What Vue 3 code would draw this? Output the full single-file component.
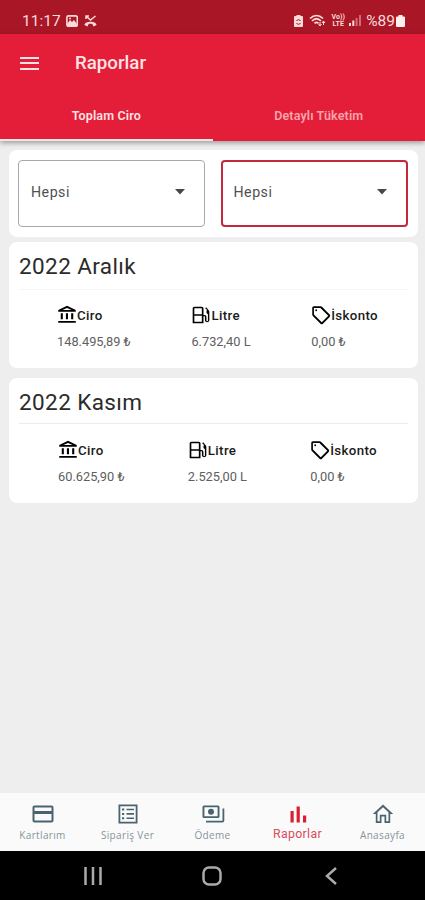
<template>
  <div class="screen">
    <div class="status">
      <span class="clock">11:17</span>
      <svg class="s-image" viewBox="0 0 12 12">
        <rect x="0.9" y="0.9" width="10.4" height="10.4" rx="1.6" fill="none" stroke="#fbdada" stroke-width="1.6" />
        <path d="M1 9l3-4 2 2 2-2 3 4v2H1z" fill="#fbdada" />
        <circle cx="4" cy="3.5" r="1" fill="#fbdada" />
      </svg>
      <svg class="s-missed" viewBox="0 0 13 12">
        <path d="M.5 10c0-4.500 12-4.500 12 0l-3 1.500-1-2.300c-1.300-.5-2.700-.5-4 0l-1 2.300z" fill="#fbdada" />
        <path d="M2 4V1h3M2 1l4.500 4L11.500 1" fill="none" stroke="#fbdada" stroke-width="1.5" />
      </svg>
      <div class="status-right">
        <svg width="9" height="12" viewBox="0 0 9 12">
          <path d="M2.500 0h4v1H8a1 1 0 0 1 1 1v9a1 1 0 0 1-1 1H1a1 1 0 0 1-1-1V2a1 1 0 0 1 1-1h1.500z" fill="#fbdada" />
          <path d="M2.500 6a2.200 2.200 0 0 1 4 0M6.500 8a2.200 2.200 0 0 1-4 0" fill="none" stroke="#a91727" />
        </svg>
        <svg class="s-wifi" width="17" height="13" viewBox="0 0 17 13">
          <path d="M1 4.500c4-4 9-4 13 0M3 7c3-3 6-3 9 0M5.500 9.300q2-1.800 4 0" fill="none" stroke="#fbdada" stroke-width="1.700" />
          <path d="M11 12V8M9.500 10L11 12l1.500-2M14.500 7v4M13 9l1.500-2L16 9" fill="none" stroke="#fbdada" stroke-width="1" />
        </svg>
        <span class="volte"><b>Vo))</b><b>LTE</b></span>
        <svg class="s-signal" width="12" height="11" viewBox="0 0 12 11">
          <path d="M0 8h2v3H0zM3.300 5.500h2V11h-2z" fill="#fbdada" />
          <path d="M6.600 3h2v8h-2zM10 0h2v11h-2z" fill="#d06c75" />
        </svg>
        <span class="percent">%89</span>
        <svg width="9" height="12" viewBox="0 0 9 12">
          <path d="M2.500 0h4v1.500H8a1 1 0 0 1 1 1V11a1 1 0 0 1-1 1H1a1 1 0 0 1-1-1V2.500a1 1 0 0 1 1-1h1.500z" fill="#fff0ee" />
        </svg>
      </div>
    </div>

    <header class="appbar">
      <div class="title-row">
        <div class="burger"><i></i><i></i><i></i></div>
        <h1>Raporlar</h1>
      </div>
      <div class="tabs">
        <div class="tab active"><span>Toplam Ciro</span></div>
        <div class="tab"><span>Detaylı Tüketim</span></div>
      </div>
    </header>

    <main>
      <section class="card filters">
        <div v-for="n in 2" :key="n" class="select" :class="{ focused: n === 2 }">
          <span>Hepsi</span>
          <svg width="10" height="6" viewBox="0 0 10 6"><path d="M0 0h10L5 5.500z" fill="#484848" /></svg>
        </div>
      </section>

      <section v-for="(report, i) in reports" :key="report.month" class="card report" :class="'report-' + i">
        <h2>{{ report.month }}</h2>
        <div class="stats">
          <div v-for="stat in report.stats" :key="stat.label" class="stat">
            <div class="label">
              <svg class="stat-icon" viewBox="0 0 24 24"><path fill-rule="evenodd" :d="icons[stat.icon]" /></svg>
              <span>{{ stat.label }}</span>
            </div>
            <div class="value">{{ stat.value }}</div>
          </div>
        </div>
      </section>
    </main>

    <nav class="bottom">
      <div v-for="item in menu" :key="item.label" class="item" :class="{ current: item.current }">
        <svg viewBox="0 0 24 24"><path fill-rule="evenodd" :d="icons[item.icon]" /></svg>
        <span>{{ item.label }}</span>
      </div>
    </nav>

    <div class="system">
      <svg width="18" height="18" viewBox="0 0 18 18"><path d="M1.500 0v18M9 0v18M16.500 0v18" /></svg>
      <svg width="20" height="20" viewBox="0 0 20 20"><rect x="1.500" y="1.500" width="17" height="17" rx="5.500" /></svg>
      <svg width="12" height="18" viewBox="0 0 12 18"><path d="M11 1L2 9l9 8" /></svg>
    </div>
  </div>
</template>

<script setup>
const icons = {
  bank: "M7 10H4.500v7H7v-7zm6.200 0h-2.500v7h2.500v-7zM22.500 19.200h-21v2h21v-2zM19.500 10H17v7h2.500v-7zM12 3.500L17.500 6H6.500L12 3.500M12 .8L1.500 6v2.200h21V6L12 .8z",
  fuel: "M4 2h9a2 2 0 0 1 2 2v8h1.500a2 2 0 0 1 2 2v4.500a.9.9 0 0 0 1.800 0V11a3 3 0 0 1-1.800-3c0-1 .3-1.500.8-2L17 4l1.200-1.200 3 3.500c.5.500.8 1 .8 1.700v10.500a2.700 2.700 0 0 1-5.300 0v-5H15V22H2V4a2 2 0 0 1 2-2zm0 2v7h9V4H4zm0 9v7h9v-7H4z",
  tag: "M22.400 11.400L13.200 2.200C12.800 1.800 12.200 1.500 11.500 1.500H3.500c-1.100 0-2 .9-2 2v8c0 .6.200 1.200.7 1.700l9.200 9.200c.8.800 2.100.8 2.900 0l8.100-8.100c.8-.8.8-2.100 0-2.900zM12.900 20.700L3.500 11.300V3.500h7.800l9.400 9.400-7.800 7.800zM6.200 5.200a1.100 1.100 0 1 0 0 2.200 1.100 1.100 0 0 0 0-2.200z",
  card: "M20.500 3.500h-17a2 2 0 0 0-2 2v13a2 2 0 0 0 2 2h17a2 2 0 0 0 2-2v-13a2 2 0 0 0-2-2zm0 15h-17v-6.500h17v6.500zm0-9.500h-17V5.500h17V9z",
  list: "M2.500 2.500h19v19h-19zM4.300 4.300v15.400h15.400V4.300zM6 6.500h2.200v2H6zM10.500 6.700H18v1.600h-7.500zM6 10.900h2.200v2H6zM10.500 11.100H18v1.600h-7.500zM6 15.300h2.200v2H6zM10.500 15.500H18v1.600h-7.500z",
  money: "M3 3.500h14a1.500 1.500 0 0 1 1.500 1.500v9.500a1.500 1.500 0 0 1-1.500 1.500H3a1.500 1.500 0 0 1-1.500-1.500V5A1.500 1.500 0 0 1 3 3.500zM3.400 5.300v8.900h13.200V5.300zM10 6.800a3 3 0 1 1 0 6 3 3 0 0 1 0-6zM21.500 6.500h1.800v12a2 2 0 0 1-2 2H5v-1.800h16.500z",
  chart: "M4.500 9h3.200v11.500H4.500zM10.600 4.500h3.200v16h-3.200zM17 13.500h3.200v7H17z",
  home: "M12 5.200l5.500 5V19.300h-2.300v-6.600H8.800v6.600H6.500v-9.100L12 5.200M12 2.500L1.800 12h3v9h5.700v-6.600h3V21h5.700v-9h3L12 2.500z",
};

const reports = [
  {
    month: "2022 Aralık",
    stats: [
      { icon: "bank", label: "Ciro", value: "148.495,89 ₺" },
      { icon: "fuel", label: "Litre", value: "6.732,40 L" },
      { icon: "tag", label: "İskonto", value: "0,00 ₺" },
    ],
  },
  {
    month: "2022 Kasım",
    stats: [
      { icon: "bank", label: "Ciro", value: "60.625,90 ₺" },
      { icon: "fuel", label: "Litre", value: "2.525,00 L" },
      { icon: "tag", label: "İskonto", value: "0,00 ₺" },
    ],
  },
];

const menu = [
  { icon: "card", label: "Kartlarım" },
  { icon: "list", label: "Sipariş Ver" },
  { icon: "money", label: "Ödeme" },
  { icon: "chart", label: "Raporlar", current: true },
  { icon: "home", label: "Anasayfa" },
];
</script>

<style>
body {
  margin: 0;
}
</style>

<style scoped>
.screen {
  width: 425px;
  height: 900px;
  display: flex;
  flex-direction: column;
  overflow: hidden;
  background: #eeeeee;
  font-family: Roboto, "Liberation Sans", sans-serif;
}

.status {
  height: 34px;
  box-sizing: border-box;
  flex: none;
  display: flex;
  align-items: center;
  padding: 7px 20px 0 22px;
  background: #a91727;
  color: #fbdada;
}

.clock {
  width: 44px;
  font-size: 15.5px;
}

.s-image {
  width: 12px;
  height: 12px;
}

.s-missed {
  width: 13px;
  height: 12px;
  margin-left: 6px;
}

.status-right {
  margin-left: auto;
  display: flex;
  align-items: center;
}

.s-wifi {
  margin-left: 6px;
}

.volte {
  display: flex;
  flex-direction: column;
  align-items: center;
  width: 14px;
  margin-left: 5px;
  font-size: 7px;
  line-height: 6.5px;
  white-space: nowrap;
}

.s-signal {
  margin-left: 4px;
}

.percent {
  margin: 0 1px 0 5px;
  font-size: 15.5px;
}

.appbar {
  flex: none;
  height: 107px;
  display: flex;
  flex-direction: column;
  position: relative;
  background: #e41e39;
  color: #fde3e3;
  box-shadow: 0 2px 5px rgba(0, 0, 0, 0.35);
}

.title-row {
  height: 58px;
  display: flex;
  align-items: center;
  padding-left: 20px;
}

.burger {
  width: 19px;
  display: flex;
  flex-direction: column;
  gap: 3.5px;
}

.burger i {
  height: 2px;
  background: #fde3e3;
}

h1 {
  margin: 0 0 0 36px;
  font-size: 18.7px;
  font-weight: 500;
}

.tabs {
  flex: 1;
  display: flex;
}

.tab {
  flex: 1;
  display: flex;
  align-items: center;
  justify-content: center;
  box-sizing: border-box;
  border-bottom: 2px solid transparent;
  font-size: 12.5px;
  font-weight: 600;
  letter-spacing: 0.15px;
  color: #f8a6ab;
}

.tab.active {
  border-bottom-color: #f4e4e4;
  color: #fde3e3;
}

main {
  flex: 1;
  padding: 9px 7px 0 9px;
}

.card {
  box-sizing: border-box;
  background: #fff;
  border-radius: 8px;
}

.filters {
  height: 87px;
  display: flex;
  gap: 16px;
  padding: 10px 10px 10px 9px;
}

.select {
  flex: 1;
  display: flex;
  align-items: center;
  justify-content: space-between;
  box-sizing: border-box;
  padding: 0 19px 4px 12px;
  border: 1px solid #a9a9a9;
  border-radius: 4px;
  font-size: 14.2px;
  letter-spacing: 0.5px;
  color: #505050;
}

.select.focused {
  border: 2px solid #c4283a;
  padding-left: 11px;
}

.report {
  height: 126px;
  margin-top: 5px;
  padding: 0 10px;
}

.report-1 {
  margin-top: 10px;
  height: 125px;
}

h2 {
  height: 48px;
  margin: 0;
  box-sizing: border-box;
  border-bottom: 1px solid #f6f6f6;
  font-size: 22.5px;
  font-weight: 400;
  line-height: 49px;
  letter-spacing: 0.4px;
  color: #2b2b2b;
}

.report-1 h2 {
  height: 46px;
  line-height: 48px;
  border-color: #ececec;
}

.stats {
  display: flex;
  justify-content: space-between;
  padding: 15px 30px 0 38px;
}

.report-1 .stats {
  padding: 16px 31px 0 39px;
}

.label {
  height: 20px;
  display: flex;
  align-items: center;
  font-size: 13.3px;
  font-weight: 500;
  letter-spacing: 0.35px;
  color: #1b1b1b;
}

.stat-icon {
  width: 20px;
  height: 20px;
}

.value {
  height: 16px;
  margin-top: 9px;
  font-size: 12.8px;
  line-height: 16px;
  color: #606060;
}

.bottom {
  height: 58px;
  flex: none;
  display: flex;
  background: #fafafa;
}

.item {
  flex: 1;
  display: flex;
  flex-direction: column;
  align-items: center;
  padding-top: 9px;
  font-family: "Open Sans", sans-serif;
  font-size: 10px;
  letter-spacing: 0.35px;
  color: #88949b;
}

.item svg {
  width: 24px;
  height: 24px;
  fill: #49646f;
}

.item span {
  line-height: 18px;
}

.item.current {
  font-family: Roboto, sans-serif;
  font-size: 12.3px;
  color: #d94b5a;
}

.item.current svg {
  fill: #da1f32;
}

.item.current span {
  line-height: 17px;
}

.system {
  height: 49px;
  flex: none;
  display: flex;
  align-items: center;
  justify-content: space-between;
  box-sizing: border-box;
  padding: 0 88px 0 84px;
  background: #000;
}

.system svg {
  fill: none;
  stroke: #aaa;
  stroke-width: 2.5;
}

/* the three buttons differ in width, so the middle one sits off centre */
.system svg:nth-child(2) {
  margin-right: 3px;
}
</style>
